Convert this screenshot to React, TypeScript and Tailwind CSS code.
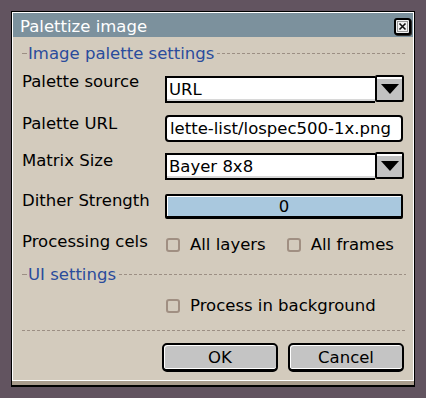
import React from 'react'

// dashed separator used by section headers and the footer rule
function Dashes({ className = '' }: { className?: string }) {
  return (
    <div
      className={`h-px bg-[image:repeating-linear-gradient(90deg,#9c8f84_0px,#9c8f84_3px,transparent_3px,transparent_5px)] ${className}`}
    />
  )
}

function Section({ title, className = '' }: { title: string; className?: string }) {
  return (
    <div className={`flex items-center h-[19px] ${className}`}>
      <div className="w-[5px] h-px bg-[#9c8f84]" />
      <span className="text-[#2a4c9c] pl-px pr-[3px] whitespace-nowrap">{title}</span>
      <Dashes className="flex-1" />
    </div>
  )
}

function Row({
  label,
  ctrl,
  className = '',
  children,
}: {
  label: string
  ctrl: string
  className?: string
  children: React.ReactNode
}) {
  return (
    <div className={`flex items-start ${className}`}>
      <div className="w-[143px] shrink-0 whitespace-nowrap">{label}</div>
      <div className={`flex-1 pr-[3px] ${ctrl}`}>{children}</div>
    </div>
  )
}

function Combo({ value }: { value: string }) {
  return (
    <div className="flex h-[27px] -mr-px">
      <div className="flex-1 flex items-center bg-white border-2 border-black border-r-0 pl-[2px] shadow-[inset_0_-2px_0_#d8d8d8]">
        {value}
      </div>
      <div className="w-[29px] h-[27px] -mt-[1px] flex items-center justify-center bg-[#c2c2c2] border-2 border-black rounded-[2px] shadow-[inset_0_2px_0_#ffffff]">
        <svg width="18" height="10" viewBox="0 0 18 10">
          <polygon points="0,0 18,0 9,10" fill="#000" />
        </svg>
      </div>
    </div>
  )
}

function Check({ label }: { label: string }) {
  return (
    <div className="flex items-center gap-[10px] h-[19px]">
      <div className="w-[14px] h-[14px] border-2 border-[#a08f82] rounded-[3px]" />
      <span className="whitespace-nowrap">{label}</span>
    </div>
  )
}

function Btn({ label }: { label: string }) {
  return (
    <div className="w-[116px] h-[29px] flex items-center justify-center bg-[#c4c4c4] border-2 border-b-[3px] border-black rounded-[5px] shadow-[inset_1px_1px_0_#ffffff,inset_0_-1px_0_#ffffff]">
      {label}
    </div>
  )
}

export default function App() {
  return (
    <div className="w-[426px] h-[398px] bg-[#625460] pt-[11px] pl-[11px] font-['DejaVu_Sans',sans-serif] text-[16.5px] leading-[19px] text-black">
      <div className="w-[404px] border border-b-2 border-black">
        <div className="border border-b-0 border-white">
          {/* title bar */}
          <div className="h-[24px] bg-[#7c919d] flex items-center justify-between pl-[7px] pr-[2px]">
            <span className="text-white pt-[2px]">Palettize image</span>
            <div className="w-[17px] h-[17px] mt-[3px] flex items-center justify-center bg-[#f2f2f2] border-2 border-black rounded-[3px] shadow-[1px_1px_0_#2e2e2e]">
              <svg width="11" height="11" viewBox="0 0 11 11">
                <rect x="0.5" y="0.5" width="10" height="10" fill="none" stroke="#9a9a9a" />
                <path d="M2.5 2.5 L8.5 8.5 M8.5 2.5 L2.5 8.5" stroke="#111" strokeWidth="1.6" />
              </svg>
            </div>
          </div>

          {/* body */}
          <div className="bg-[#d3cbbd] pl-[9px] pr-[7px] pb-[8px] flex flex-col">
            <Section title="Image palette settings" className="mt-[7px]" />

            <Row label="Palette source" ctrl="mt-[4px]" className="mt-[9px]">
              <Combo value="URL" />
            </Row>

            <Row label="Palette URL" ctrl="mt-[1px]" className="mt-[11px]">
              <div className="h-[27px] flex items-center bg-white border-2 border-black rounded-[4px] pl-[3px] overflow-hidden whitespace-nowrap">
                lette-list/lospec500-1x.png
              </div>
            </Row>

            <Row label="Matrix Size" ctrl="mt-[2px]" className="mt-[9px]">
              <Combo value="Bayer 8x8" />
            </Row>

            <Row label="Dither Strength" ctrl="mt-[3px]" className="mt-[11px]">
              <div className="h-[25px] flex items-center justify-center bg-[#a9c8de] border-2 border-b-[3px] border-black rounded-[2px] shadow-[inset_1px_1px_0_#ffffff]">
                0
              </div>
            </Row>

            <Row label="Processing cels" ctrl="mt-[3px] pl-px" className="mt-[13px]">
              <div className="flex gap-[21px]">
                <Check label="All layers" />
                <Check label="All frames" />
              </div>
            </Row>

            <Section title="UI settings" className="mt-[11px]" />

            <div className="mt-[12px] pl-[144px]">
              <Check label="Process in background" />
            </div>

            <Dashes className="mt-[15px]" />

            <div className="mt-[12px] ml-[140px] flex gap-[10px]">
              <Btn label="OK" />
              <Btn label="Cancel" />
            </div>
          </div>
        </div>
        <div className="h-px bg-white" />
        <div className="h-[4px] bg-[#a89b8c]" />
      </div>
    </div>
  )
}
